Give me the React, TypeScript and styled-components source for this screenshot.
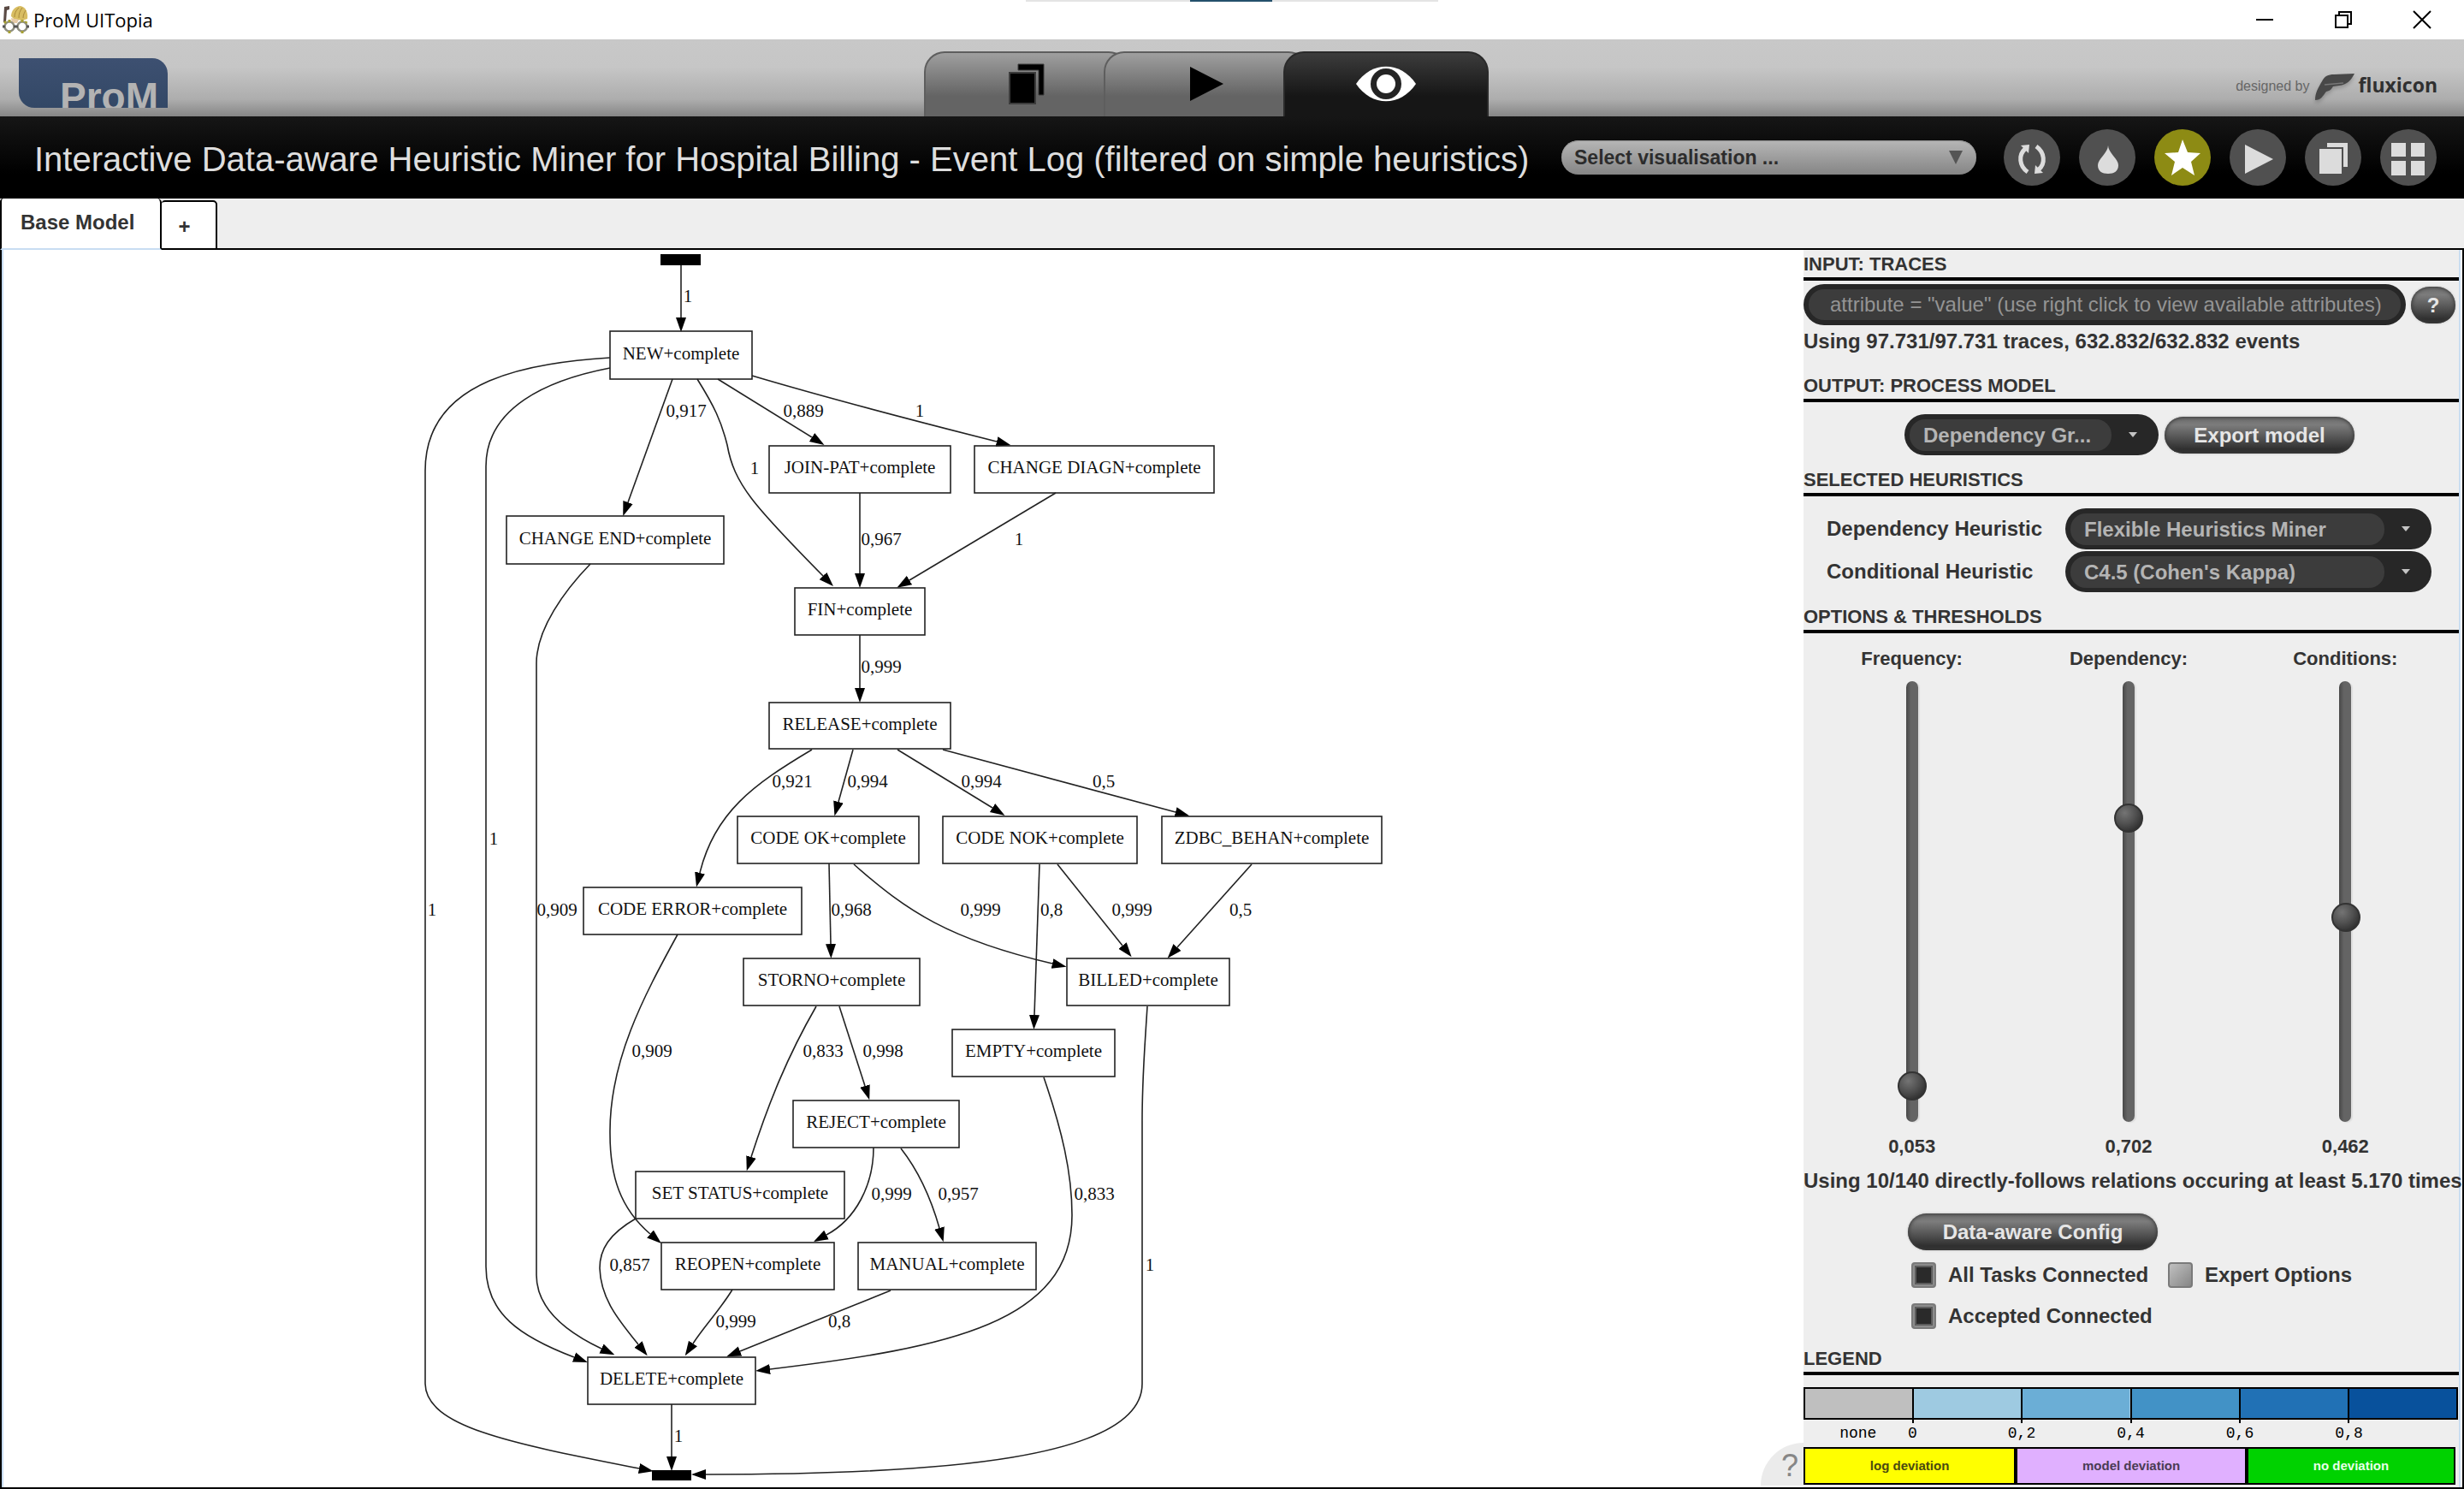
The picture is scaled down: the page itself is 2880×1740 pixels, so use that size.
import React from 'react';
import styled, { createGlobalStyle } from 'styled-components';

const SANS = '"Liberation Sans", Arial, sans-serif';

const GlobalStyle = createGlobalStyle`
  *, *::before, *::after { box-sizing: border-box; }
  body { margin: 0; background: #fff; color: #333; font-family: ${SANS}; }
  button, input, select { font: inherit; color: inherit; margin: 0; }
  h1, h2, p { margin: 0; }
`;

/* ---------- window frame ---------- */

const Window = styled.div`
  display: flex;
  flex-direction: column;
  min-height: 100vh;
`;

const TitleBar = styled.header`
  position: relative;
  display: flex;
  align-items: center;
  height: 46px;
  padding: 0 3px 0 2px;
  background: #fff;
  color: #000;
`;

const AppName = styled.span`
  flex: 1;
  margin-left: 5px;
  font: 22px/40px "Open Sans", sans-serif;
`;

const WindowButton = styled.button`
  display: flex;
  align-items: center;
  justify-content: center;
  width: 92px;
  height: 46px;
  border: 0;
  padding: 0;
  background: none;
`;

const DockHint = styled.div`
  position: absolute;
  top: 0;
  left: 50%;
  width: 482px;
  height: 2px;
  margin-left: -241px;
  background: linear-gradient(90deg, #e4e4e4 192px, #24506b 192px 288px, #e4e4e4 288px);
`;

const Banner = styled.div`
  display: flex;
  height: 90px;
  background: linear-gradient(#c8c8c8, #c6c6c6 36%, #adadad 78%, #868686);
`;

const LogoArea = styled.div`
  flex: 0 0 37.5%;
  padding: 22px 22px 10px;
`;

const Logo = styled.div`
  width: 174px;
  height: 58px;
  padding: 20px 0 0 48px;
  overflow: hidden;
  border-radius: 0 18px 0 18px;
  background: linear-gradient(#3d5071, #334866);
  color: #b3b3b3;
  font-size: 46px;
  font-weight: 700;
  line-height: 50px;
`;

const ViewTabs = styled.nav`
  display: flex;
  align-items: flex-end;
`;

const ViewTab = styled.button<{ $active?: boolean }>`
  display: flex;
  align-items: center;
  justify-content: center;
  width: 240px;
  height: 76px;
  padding: 0 0 2px;
  border: 2px solid ${p => (p.$active ? '#2a2a2a' : '#5e5e5e')};
  border-bottom: 0;
  border-radius: 24px 24px 0 0;
  background: ${p => (p.$active
    ? 'linear-gradient(#3c3c3c, #161616 68%)'
    : 'linear-gradient(#9f9f9f, #646464 68%)')};
  & + & { margin-left: -30px; }
`;

const Credit = styled.div`
  display: flex;
  align-items: center;
  gap: 3px;
  margin: 0 31px 0 auto;
  padding-top: 20px;
  font-size: 16px;
  line-height: 20px;
  color: #666;
`;

const CreditMark = styled.svg`
  margin: 2px 0 0 3px;
  filter: drop-shadow(0 3px 2px rgba(0, 0, 0, 0.2));
`;

const CreditName = styled.strong`
  margin-bottom: 4px;
  font: 700 23px/26px "Open Sans", sans-serif;
  color: #303030;
`;

const ActionBar = styled.div`
  display: flex;
  align-items: center;
  height: 96px;
  padding: 0 32px 0 40px;
  background: linear-gradient(#161616, #000 70%);
`;

const PageTitle = styled.h1`
  flex: 1;
  padding-top: 3px;
  white-space: nowrap;
  font-size: 40px;
  font-weight: 400;
  line-height: 48px;
  color: #dedede;
`;

const VisualisationPicker = styled.div`
  position: relative;
  width: 485px;
  margin-right: 32px;
  svg { position: absolute; right: 16px; top: 12px; pointer-events: none; }
`;

const VisualisationSelect = styled.select`
  appearance: none;
  display: block;
  width: 100%;
  height: 40px;
  padding: 0 48px 0 15px;
  border: 0;
  border-radius: 20px;
  background: linear-gradient(#b6b6b6, #858585);
  box-shadow: inset 0 1px 1px #8c8c8c;
  color: #2c2c2c;
  font-size: 23px;
  font-weight: 700;
`;

const RoundActions = styled.div`
  display: flex;
  gap: 22px;
`;

const RoundButton = styled.button<{ $highlight?: boolean }>`
  display: flex;
  width: 66px;
  height: 66px;
  padding: 0;
  border: 0;
  border-radius: 50%;
  background: ${p => (p.$highlight ? '#8d8b14' : '#505050')};
  color: ${p => (p.$highlight ? '#fff' : '#dcdcdc')};
`;

/* ---------- document tabs ---------- */

const DocTabs = styled.div`
  display: flex;
  align-items: flex-end;
  height: 60px;
  background: linear-gradient(#000, #000) bottom / 100% 2px no-repeat #eee;
`;

const DocTab = styled.button<{ $current?: boolean }>`
  height: ${p => (p.$current ? '60px' : '58px')};
  padding: ${p => (p.$current ? '0 30px 2px 22px' : '4px 30px 0 19px')};
  border: 2px solid #000;
  border-left-width: ${p => (p.$current ? '2px' : '0')};
  border-top-width: ${p => (p.$current ? '0' : '2px')};
  border-bottom-color: ${p => (p.$current ? '#c8ddf2' : '#000')};
  border-radius: 4px 5px 0 0;
  background: #fff;
  font-size: 24px;
  font-weight: 700;
  line-height: 32px;
`;

/* ---------- workspace ---------- */

const Workspace = styled.main`
  display: flex;
  flex: 1;
  border: 2px solid #000;
  border-top: 0;
  padding-right: 2px;
`;

const Canvas = styled.section`
  position: relative;
  flex: 1;
  min-width: 0;
  border-left: 2px solid #c8ddf2;
  background: #fff;
`;

const Graph = styled.svg`
  display: block;
  width: 100%;
  text { font: 21px "Liberation Serif", "Times New Roman", serif; text-anchor: middle; }
`;

const HelpCorner = styled.button`
  position: absolute;
  right: 0;
  bottom: 2px;
  width: 50px;
  height: 50px;
  padding: 4px 0 0 18px;
  border: 0;
  border-radius: 50px 0 0 0;
  background: #ebebeb;
  color: #868686;
  font-size: 36px;
`;

const Sidebar = styled.aside`
  width: 768px;
  border-right: 2px solid #c8ddf2;
  background: #eee;
`;

const Section = styled.section`
  display: flex;
  flex-direction: column;
`;

const Heading = styled.h2`
  padding-top: 3px;
  padding-bottom: 1px;
  border-bottom: 4px solid #000;
  font-size: 22px;
  font-weight: 700;
  line-height: 28px;
`;

const Stat = styled.p<{ $spaceBelow: number }>`
  margin-bottom: ${p => p.$spaceBelow}px;
  white-space: nowrap;
  font-size: 24px;
  font-weight: 700;
  line-height: 38px;
`;

const FilterRow = styled.div`
  display: flex;
  align-items: center;
  gap: 6px;
  padding: 4px 4px 0 0;
`;

const FilterShell = styled.div`
  flex: 1;
  height: 48px;
  padding: 6px;
  border-radius: 24px;
  background: #272727;
`;

const FilterInput = styled.input`
  display: block;
  width: 100%;
  height: 36px;
  padding: 0 21px 0 25px;
  border: 0;
  border-radius: 18px;
  background: #3c3c3c;
  color: #ddd;
  font-size: 24px;
  &::placeholder { color: #949494; opacity: 1; }
`;

const PillButton = styled.button<{ $width: number }>`
  display: block;
  width: ${p => p.$width}px;
  height: 43px;
  padding: 0;
  border: 0;
  border-radius: 22px;
  background: linear-gradient(#6c6c6c, #7c7c7c 22%, #5c5c5c 50%, #303030 88%);
  box-shadow: inset 0 0 4px 1px #3a3a3a, 0 0 2px 1px #d6d6d6;
  color: #e6e6e6;
  font-size: 24px;
  font-weight: 700;
  line-height: 43px;
`;

const OutputRow = styled.div`
  display: flex;
  align-items: center;
  justify-content: center;
  gap: 7px;
  padding: 14px 4px 12px 0;
`;

const ComboShell = styled.div<{ $width: number }>`
  display: flex;
  align-items: center;
  width: ${p => p.$width}px;
  height: 48px;
  padding: 0 25px 0 6px;
  border-radius: 24px;
  background: #272727;
  svg { flex: none; margin-left: 20px; }
`;

const ComboSelect = styled.select`
  appearance: none;
  flex: 1;
  min-width: 0;
  height: 37px;
  padding: 0 16px;
  border: 0;
  border-radius: 18px;
  background: #3c3c3c;
  color: #b4b4b4;
  font-size: 24px;
  font-weight: 700;
`;

const HeuristicGrid = styled.div`
  display: grid;
  grid-template-columns: 1fr auto;
  align-items: center;
  row-gap: 2px;
  padding: 14px 32px 12px 27px;
`;

const FieldLabel = styled.label`
  font-size: 24px;
  font-weight: 700;
  line-height: 32px;
`;

const Sliders = styled.div`
  display: grid;
  grid-template-columns: repeat(3, 1fr);
  padding: 14px 6px 5px 0;
`;

const SliderColumn = styled.div`
  display: flex;
  flex-direction: column;
  align-items: center;
  font-size: 22px;
  font-weight: 700;
  line-height: 32px;
`;

const Range = styled.input`
  appearance: none;
  writing-mode: vertical-lr;
  direction: rtl;
  width: 14px;
  height: 515px;
  margin: 10px 0 13px;
  border-radius: 7px;
  background: linear-gradient(90deg, #484848, #646464 40%, #646464);
  box-shadow: 2px 1px 1px #dedede;
  &::-webkit-slider-thumb {
    appearance: none;
    width: 34px;
    height: 34px;
    margin-left: 1px;
    border: 2px solid #333;
    border-radius: 50%;
    background: radial-gradient(circle at 35% 30%, #747474, #505050 45%, #222 95%);
  }
`;

const OptionsBlock = styled.div`
  padding-left: 122px;
`;

const CheckGrid = styled.div`
  display: grid;
  grid-template-columns: 300px auto;
  justify-content: start;
  row-gap: 18px;
  padding: 14px 0 18px 4px;
`;

const CheckLabel = styled.label`
  display: flex;
  align-items: center;
  gap: 14px;
  height: 30px;
  white-space: nowrap;
  font-size: 24px;
  font-weight: 700;
`;

const CheckBox = styled.input`
  appearance: none;
  flex: none;
  width: 29px;
  height: 30px;
  border: 2px solid #7a7a7a;
  border-radius: 4px;
  background: linear-gradient(135deg, #c0c0c0, #868686);
  &:checked {
    background: linear-gradient(135deg, #2a2a2a, #2a2a2a) center / 17px 18px no-repeat #8c8c8c;
    box-shadow: inset 0 0 0 2px #8c8c8c, inset 0 0 0 4px #5c5c5c;
  }
`;

/* ---------- legend ---------- */

const Scale = styled.div`
  display: flex;
  margin: 14px 1px 0 0;
  height: 38px;
  border: 2px solid #000;
`;

const Swatch = styled.span<{ $color: string }>`
  flex: 1;
  height: 40px;
  background: linear-gradient(${p => p.$color}, ${p => p.$color}) top / 100% 34px no-repeat;
  & + & { border-left: 2px solid #000; }
`;

/* Twelve half-swatch columns, so that a label can sit across a divider. */
const ScaleLabels = styled.div`
  display: grid;
  grid-template-columns: repeat(12, 1fr);
  height: 32px;
  margin-right: 1px;
  padding-top: 5px;
  color: #000;
  font: 18px/22px "Liberation Mono", "Courier New", monospace;
  text-align: center;
`;

const ScaleLabel = styled.span<{ $column: number }>`
  grid-row: 1;
  grid-column: ${p => p.$column} / span 2;
`;

const Deviations = styled.div`
  display: flex;
  margin-right: 4px;
`;

const Deviation = styled.div<{ $fill: string; $ink: string }>`
  flex: 1 1 auto;
  height: 44px;
  border: 2px solid #000;
  background: ${p => p.$fill};
  color: ${p => p.$ink};
  font-size: 15px;
  font-weight: 700;
  line-height: 40px;
  text-align: center;
`;

/* ---------- process model ---------- */

type Box = [name: string, x1: number, y1: number, x2: number, y2: number];

const nodes: Box[] = [
  ['NEW+complete', 713, 387, 879, 443],
  ['JOIN-PAT+complete', 899, 521, 1111, 576],
  ['CHANGE DIAGN+complete', 1139, 521, 1419, 576],
  ['CHANGE END+complete', 592, 603, 846, 659],
  ['FIN+complete', 929, 687, 1081, 742],
  ['RELEASE+complete', 899, 821, 1111, 875],
  ['CODE OK+complete', 862, 954, 1074, 1009],
  ['CODE NOK+complete', 1102, 954, 1329, 1009],
  ['ZDBC_BEHAN+complete', 1358, 954, 1615, 1009],
  ['CODE ERROR+complete', 682, 1037, 937, 1092],
  ['STORNO+complete', 869, 1120, 1075, 1175],
  ['BILLED+complete', 1247, 1120, 1437, 1175],
  ['EMPTY+complete', 1113, 1203, 1303, 1258],
  ['REJECT+complete', 927, 1286, 1121, 1341],
  ['SET STATUS+complete', 743, 1369, 987, 1424],
  ['REOPEN+complete', 773, 1452, 975, 1507],
  ['MANUAL+complete', 1003, 1452, 1211, 1507],
  ['DELETE+complete', 687, 1586, 883, 1641],
];

type Edge = [path: string, label: string, x: number, y: number];

const edges: Edge[] = [
  ['M796 310V371', '1', 804, 353],
  ['M713 418C625 424 497 440 497 550V1617C498 1668 600 1687 747 1716', '1', 505, 1070],
  ['M713 430C640 444 568 476 568 545V1480C568 1535 608 1562 671 1586', '1', 577, 987],
  ['M786 443L734 587', '0,917', 802, 487],
  ['M815 443C835 475 843 492 850 520C858 565 880 590 962 673', '1', 882, 554],
  ['M839 443L949 511', '0,889', 939, 487],
  ['M879 439C970 466 1070 492 1165 516', '1', 1075, 487],
  ['M1005 576V670', '0,967', 1030, 637],
  ['M1234 576L1063 678', '1', 1191, 637],
  ['M690 659C660 690 627 735 627 775V1490C627 1530 665 1558 703 1576', '0,909', 651, 1070],
  ['M1005 742V804', '0,999', 1030, 786],
  ['M949 876C880 917 835 950 818 1020', '0,921', 926, 920],
  ['M997 876L980 937', '0,994', 1014, 920],
  ['M1049 876L1160 944', '0,994', 1147, 920],
  ['M1102 876L1374 949', '0,5', 1290, 920],
  ['M969 1009L971 1103', '0,968', 995, 1070],
  ['M998 1010C1060 1065 1110 1098 1230 1126', '0,999', 1146, 1070],
  ['M1215 1010L1209 1186', '0,8', 1229, 1070],
  ['M1236 1010L1312 1105', '0,999', 1323, 1070],
  ['M1463 1010L1376 1107', '0,5', 1450, 1070],
  ['M792 1092C752 1165 712 1240 713 1325C713 1375 725 1412 760 1442', '0,909', 762, 1235],
  ['M954 1176C920 1235 898 1290 878 1352', '0,833', 962, 1235],
  ['M981 1176L1011 1269', '0,998', 1032, 1235],
  ['M1021 1341C1021 1385 1000 1425 966 1443', '0,999', 1042, 1402],
  ['M1053 1342C1075 1370 1088 1400 1098 1435', '0,957', 1120, 1402],
  ['M743 1424C712 1442 701 1460 701 1482C702 1518 724 1544 746 1571', '0,857', 736, 1485],
  ['M1220 1259C1241 1320 1253 1370 1253 1420C1253 1545 1110 1575 900 1600', '0,833', 1279, 1402],
  ['M856 1507C842 1530 823 1550 810 1570', '0,999', 860, 1551],
  ['M1041 1508L865 1579', '0,8', 981, 1551],
  ['M1341 1176C1337 1240 1335 1260 1335 1310V1617C1335 1705 1100 1723 825 1723', '1', 1344, 1485],
  ['M785 1641V1702', '1', 793, 1685],
];

const ProcessGraph = () => (
  <Graph viewBox="4 292 2104 1446" role="img" aria-label="Dependency graph">
    <defs>
      <marker id="head" markerUnits="userSpaceOnUse" markerWidth="20" markerHeight="16" refX="0" refY="7" orient="auto">
        <path d="M0 1L17 7L0 13Z" />
      </marker>
    </defs>
    <g fill="none" stroke="#222" strokeWidth="1.6">
      {edges.map(([d], i) => <path key={i} d={d} markerEnd="url(#head)" />)}
      {nodes.map(([name, x1, y1, x2, y2]) => (
        <rect key={name} x={x1} y={y1} width={x2 - x1} height={y2 - y1} />
      ))}
    </g>
    <rect x="772" y="297" width="47" height="13" />
    <rect x="762" y="1718" width="46" height="12" />
    <g fill="#111">
      {nodes.map(([name, x1, y1, x2, y2]) => (
        <text key={name} x={(x1 + x2) / 2} y={Math.floor((y1 + y2) / 2) + 5}>{name}</text>
      ))}
      {edges.map(([, label, x, y], i) => <text key={i} x={x} y={y}>{label}</text>)}
    </g>
  </Graph>
);

/* ---------- small drawings ---------- */

const AppIcon = () => (
  <svg width="32" height="32" viewBox="0 0 32 32">
    <path d="M3 1L9 0L9 4L6 5L5 19L2 19Z" fill="#5a4a44" />
    <path d="M11 12C11 5 16 0 22 0C28 1 31 8 30 15L24 17L14 15Z" fill="#d8bd62" />
    <path d="M15 13C15 7 18 4 20 2M20 14C20 9 21 6 24 2M25 14C25 10 27 7 28 5" stroke="#a8893a" fill="none" />
    <path d="M11 14L20 16L18 20L12 20Z" fill="#e6cba8" />
    <g fill="#fff" stroke="#8f8f80" strokeWidth="2.5">
      <circle cx="9" cy="24" r="5.5" /><circle cx="24" cy="24" r="5.5" />
    </g>
    <g stroke="#a7a033" strokeWidth="3">
      <path d="M9 16V19M9 29V32M24 16V19M24 29V32M3 18L5 20M29 18L28 20" />
    </g>
    <path d="M1 24H4M14 24H19M29 24H32" stroke="#555" strokeWidth="3" />
  </svg>
);

const PickerArrow = () => (
  <svg width="16" height="16" viewBox="0 0 16 16"><path d="M0 0H16L8 16Z" fill="#555" /></svg>
);

const ComboArrow = () => (
  <svg width="10" height="6" viewBox="0 0 10 6"><path d="M0 0H10L5 6Z" fill="#c4c4c4" /></svg>
);

const roundIcons: { name: string; highlight?: boolean; art: React.ReactNode }[] = [
  {
    name: 'Refresh',
    art: (
      <>
        <path d="M28 50C18 43 17 30 25 23" fill="none" stroke="currentColor" strokeWidth="5" />
        <path d="M20 19L30 18L29 28Z" />
        <path d="M38 20C48 27 49 40 41 47" fill="none" stroke="currentColor" strokeWidth="5" />
        <path d="M46 51L36 52L37 42Z" />
      </>
    ),
  },
  { name: 'Clean', art: <path d="M34 19C34 27 46 35 46 42C46 49 41 52 34 52C27 52 22 49 22 42C22 35 34 27 34 19Z" /> },
  { name: 'Favourite', highlight: true, art: <path d="M33 12L39 27L54 28L43 38L47 54L33 45L20 54L24 38L12 28L28 27Z" /> },
  { name: 'Run', art: <path d="M18 18L51 35L18 52Z" /> },
  { name: 'Copy', art: <><path d="M26 16H50V44H45V21H26Z" /><path d="M17 23H43V52H17Z" /></> },
  { name: 'Overview', art: <path d="M13 16H30V32H13ZM36 16H52V32H36ZM13 37H30V54H13ZM36 37H52V54H36Z" /> },
];

const sliders = [
  { id: 'frequency', label: 'Frequency:', value: 0.053 },
  { id: 'dependency', label: 'Dependency:', value: 0.702 },
  { id: 'conditions', label: 'Conditions:', value: 0.462 },
];

const swatches = ['#bfbfbf', '#9ecae1', '#6baed6', '#4292c6', '#2171b5', '#08519c'];
const ticks = ['0', '0,2', '0,4', '0,6', '0,8'];

const Combo = ({ id, width, value, label }: { id: string; width: number; value: string; label?: string }) => (
  <ComboShell $width={width}>
    <ComboSelect id={id} aria-label={label}><option>{value}</option></ComboSelect>
    <ComboArrow />
  </ComboShell>
);

export default function App() {
  return (
    <Window>
      <GlobalStyle />
      <TitleBar>
        <DockHint />
        <AppIcon />
        <AppName>ProM UITopia</AppName>
        <WindowButton aria-label="Minimise">
          <svg width="22" height="22"><path d="M1 11H21" stroke="#000" strokeWidth="2" /></svg>
        </WindowButton>
        <WindowButton aria-label="Restore">
          <svg width="22" height="22" fill="none" stroke="#000" strokeWidth="2">
            <path d="M2 6H16V20H2ZM6 6V2H20V16H16" />
          </svg>
        </WindowButton>
        <WindowButton aria-label="Close">
          <svg width="22" height="22"><path d="M1 1L21 21M21 1L1 21" stroke="#000" strokeWidth="2" /></svg>
        </WindowButton>
      </TitleBar>

      <Banner>
        <LogoArea><Logo>ProM</Logo></LogoArea>
        <ViewTabs>
          <ViewTab aria-label="Workspace">
            <svg width="44" height="50" viewBox="0 0 44 50">
              <path d="M12 2H42V38H36V9H12Z" stroke="#3c3c3c" strokeWidth="1" />
              <path d="M2 12H32V48H2Z" stroke="#3c3c3c" strokeWidth="2" />
            </svg>
          </ViewTab>
          <ViewTab aria-label="Actions">
            <svg width="40" height="40" viewBox="0 0 40 40"><path d="M1 0L40 20L1 40Z" /></svg>
          </ViewTab>
          <ViewTab $active aria-label="Views">
            <svg width="70" height="42" viewBox="0 0 70 42">
              <path d="M0 21C18 -6 52 -6 70 21C52 48 18 48 0 21Z" fill="#fff" />
              <circle cx="35" cy="21" r="18" fill="#242424" />
              <circle cx="35" cy="21" r="11" fill="#fff" />
            </svg>
          </ViewTab>
        </ViewTabs>
        <Credit>
          designed by
          <CreditMark width="48" height="32" viewBox="0 0 48 32">
            <path d="M9 9C12 3 16 1 23 1L47 0C43 8 38 13 29 14L22 15C20 18 19 20 14 21C10 26 8 31 1 31C1 22 5 16 9 9Z" fill="#484848" />
            <path d="M12 13L34 11" stroke="#777" strokeWidth="1.5" />
          </CreditMark>
          <CreditName>fluxicon</CreditName>
        </Credit>
      </Banner>

      <ActionBar>
        <PageTitle>Interactive Data-aware Heuristic Miner for Hospital Billing - Event Log (filtered on simple heuristics)</PageTitle>
        <VisualisationPicker>
          <VisualisationSelect aria-label="Visualisation"><option>Select visualisation ...</option></VisualisationSelect>
          <PickerArrow />
        </VisualisationPicker>
        <RoundActions>
          {roundIcons.map(icon => (
            <RoundButton key={icon.name} $highlight={icon.highlight} aria-label={icon.name}>
              <svg width="66" height="66" viewBox="0 0 66 66" fill="currentColor">{icon.art}</svg>
            </RoundButton>
          ))}
        </RoundActions>
      </ActionBar>

      <DocTabs>
        <DocTab $current>Base Model</DocTab>
        <DocTab>+</DocTab>
      </DocTabs>

      <Workspace>
        <Canvas>
          <ProcessGraph />
          <HelpCorner>?</HelpCorner>
        </Canvas>

        <Sidebar>
          <Section>
            <Heading>INPUT: TRACES</Heading>
            <FilterRow>
              <FilterShell>
                <FilterInput aria-label="Trace filter" placeholder={'attribute = "value" (use right click to view available attributes)'} />
              </FilterShell>
              <PillButton $width={52}>?</PillButton>
            </FilterRow>
            <Stat $spaceBelow={16}>Using 97.731/97.731 traces, 632.832/632.832 events</Stat>
          </Section>

          <Section>
            <Heading>OUTPUT: PROCESS MODEL</Heading>
            <OutputRow>
              <Combo id="output" width={297} value="Dependency Gr..." label="Output model" />
              <PillButton $width={222}>Export model</PillButton>
            </OutputRow>
          </Section>

          <Section>
            <Heading>SELECTED HEURISTICS</Heading>
            <HeuristicGrid>
              <FieldLabel htmlFor="dep">Dependency Heuristic</FieldLabel>
              <Combo id="dep" width={428} value="Flexible Heuristics Miner" />
              <FieldLabel htmlFor="cond">Conditional Heuristic</FieldLabel>
              <Combo id="cond" width={428} value="C4.5 (Cohen's Kappa)" />
            </HeuristicGrid>
          </Section>

          <Section>
            <Heading>OPTIONS &amp; THRESHOLDS</Heading>
            <Sliders>
              {sliders.map(s => (
                <SliderColumn key={s.id}>
                  <label htmlFor={s.id}>{s.label}</label>
                  <Range id={s.id} type="range" min="0" max="1" step="0.001" defaultValue={s.value} />
                  <output htmlFor={s.id}>{s.value.toFixed(3).replace('.', ',')}</output>
                </SliderColumn>
              ))}
            </Sliders>
            <Stat $spaceBelow={19}>Using 10/140 directly-follows relations occuring at least 5.170 times</Stat>
            <OptionsBlock>
              <PillButton $width={292}>Data-aware Config</PillButton>
              <CheckGrid>
                <CheckLabel><CheckBox type="checkbox" defaultChecked />All Tasks Connected</CheckLabel>
                <CheckLabel><CheckBox type="checkbox" />Expert Options</CheckLabel>
                <CheckLabel><CheckBox type="checkbox" defaultChecked />Accepted Connected</CheckLabel>
              </CheckGrid>
            </OptionsBlock>
          </Section>

          <Section>
            <Heading>LEGEND</Heading>
            <Scale>
              {swatches.map(c => <Swatch key={c} $color={c} />)}
            </Scale>
            <ScaleLabels>
              <ScaleLabel $column={1}>none</ScaleLabel>
              {ticks.map((t, i) => <ScaleLabel key={t} $column={2 * i + 2}>{t}</ScaleLabel>)}
            </ScaleLabels>
            <Deviations>
              <Deviation $fill="#ffff00" $ink="#4a4a10">log deviation</Deviation>
              <Deviation $fill="#e0b0ff" $ink="#4a3c54">model deviation</Deviation>
              <Deviation $fill="#00d200" $ink="#e8ffe8">no deviation</Deviation>
            </Deviations>
          </Section>
        </Sidebar>
      </Workspace>
    </Window>
  );
}
